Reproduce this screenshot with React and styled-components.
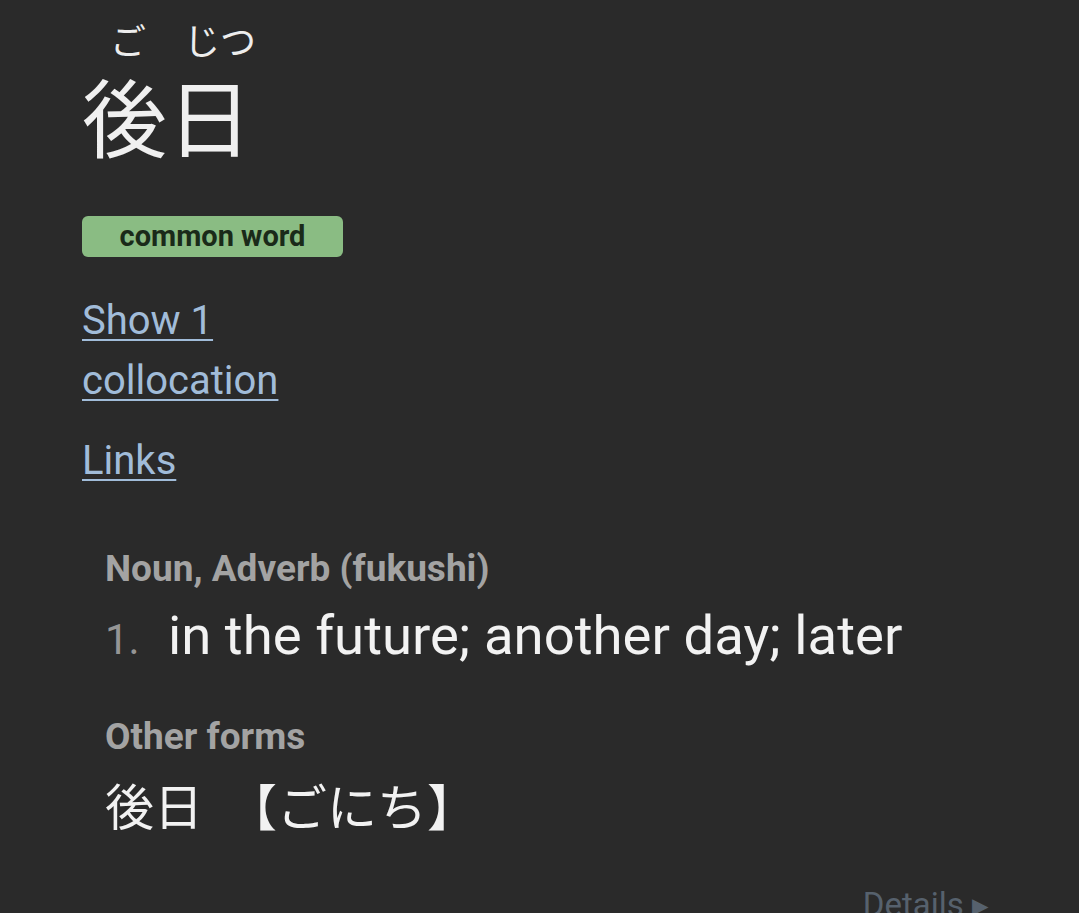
import React from "react";
import styled, { createGlobalStyle } from "styled-components";

const GlobalStyle = createGlobalStyle`
  html, body {
    margin: 0;
    padding: 0;
    background: #2a2a2a;
  }
  body {
    font-family: Roboto, "Noto Sans CJK JP", sans-serif;
    color: #ededed;
  }
`;

const Page = styled.div`
  width: 1079px;
  height: 913px;
  overflow: hidden;
  background: #2a2a2a;
  padding: 0 0 0 82px;
  box-sizing: border-box;
  display: flex;
  flex-direction: column;
`;

const Furigana = styled.div`
  display: flex;
  height: 46px;
  padding-top: 16px;
  font-family: "Noto Sans CJK JP", sans-serif;
  font-size: 36px;
  line-height: 46px;
  color: #ededed;
`;

const Kana = styled.span`
  margin-left: ${(p) => p.$offset}px;
`;

const Headword = styled.div`
  font-family: "Noto Sans CJK JP", sans-serif;
  font-size: 85px;
  line-height: 110px;
  margin-top: -3px;
  color: #f0f0f0;
`;

const Tag = styled.span`
  align-self: flex-start;
  margin-top: 47px;
  width: 261px;
  height: 41px;
  box-sizing: border-box;
  background: #8abc83;
  border-radius: 6px;
  color: #1a2a19;
  font-weight: 700;
  font-size: 29px;
  line-height: 41px;
  text-align: center;
`;

const LinkBlock = styled.div`
  display: flex;
  flex-direction: column;
  margin-top: ${(p) => p.$top}px;
`;

const Link = styled.a`
  color: #a1bcd9;
  font-size: 40px;
  line-height: 60px;
  text-decoration: underline;
  text-decoration-thickness: 2px;
  text-underline-offset: 5px;
  align-self: flex-start;
`;

const Meanings = styled.div`
  padding-left: 23px;
  margin-top: 56px;
  display: flex;
  flex-direction: column;
`;

const Label = styled.div`
  color: #a3a3a3;
  font-weight: 700;
  font-size: 37px;
  line-height: 44px;
`;

const Meaning = styled.div`
  display: flex;
  align-items: baseline;
  margin-top: 12px;
  margin-bottom: 48px;
`;

const Num = styled.span`
  color: #959595;
  font-size: 42px;
  width: 63px;
`;

const Text = styled.span`
  color: #f2f2f2;
  font-size: 54.5px;
  line-height: 64px;
`;

const Forms = styled.div`
  margin-top: 12px;
  display: flex;
  font-family: "Noto Sans CJK JP", sans-serif;
  font-size: 49px;
  line-height: 66px;
  color: #f2f2f2;
`;

const Reading = styled.span`
  margin-left: 24px;
  font-size: 50px;
`;

const Footer = styled.div`
  margin-top: 48px;
  padding-right: 90px;
  text-align: right;
  color: #56616d;
  font-size: 33px;
`;

export default function App() {
  return (
    <>
      <GlobalStyle />
      <Page>
        <Furigana>
          <Kana $offset={28}>ご</Kana>
          <Kana $offset={38}>じつ</Kana>
        </Furigana>
        <Headword>後日</Headword>
        <Tag>common word</Tag>
        <LinkBlock $top={34}>
          <Link href="#">Show 1</Link>
          <Link href="#">collocation</Link>
        </LinkBlock>
        <LinkBlock $top={20}>
          <Link href="#">Links</Link>
        </LinkBlock>
        <Meanings>
          <Label>Noun, Adverb (fukushi)</Label>
          <Meaning>
            <Num>1.</Num>
            <Text>in the future; another day; later</Text>
          </Meaning>
          <Label>Other forms</Label>
          <Forms>
            <span>後日</span>
            <Reading>【ごにち】</Reading>
          </Forms>
        </Meanings>
        <Footer>Details ▸</Footer>
      </Page>
    </>
  );
}
